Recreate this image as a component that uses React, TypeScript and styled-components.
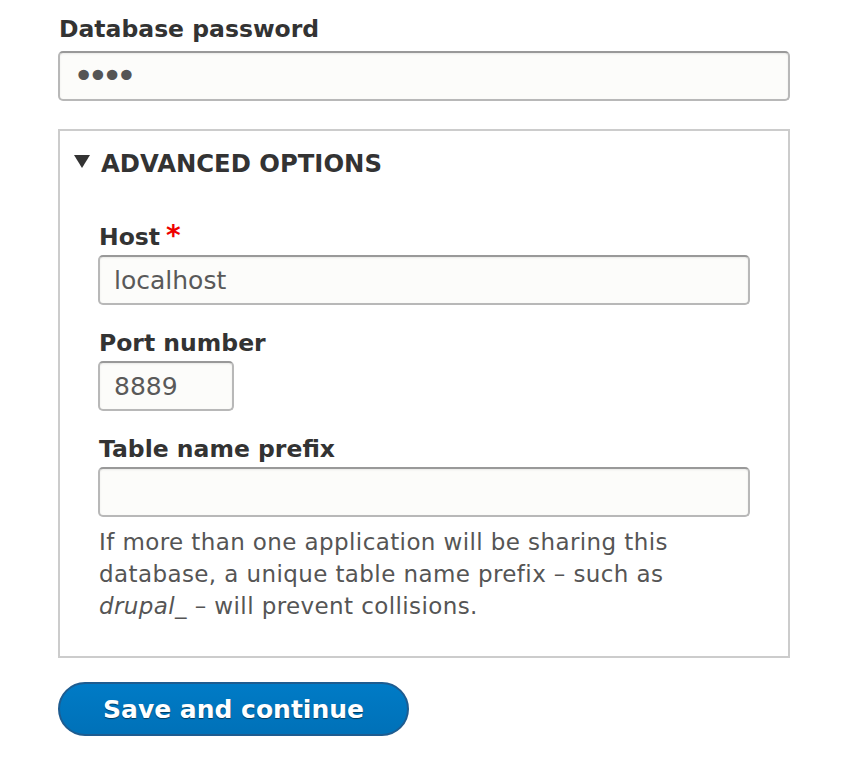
import styled, { createGlobalStyle } from "styled-components";

const GlobalStyle = createGlobalStyle`
  body {
    margin: 0;
    background: #fff;
    font-family: "DejaVu Sans", "Liberation Sans", sans-serif;
    color: #333;
  }
`;

const Page = styled.form`
  width: 732px;
  padding: 13px 0 0 58px;
`;

const FormItem = styled.div<{ $gap?: number }>`
  display: flex;
  flex-direction: column;
  margin-top: ${(p) => p.$gap ?? 0}px;
`;

const Label = styled.label<{ $space?: number }>`
  font-size: 23.5px;
  font-weight: bold;
  line-height: 32px;
  color: #333;
  margin: 0 0 ${(p) => p.$space ?? 2}px 1px;
`;

const Required = styled.span`
  color: #e00;
  margin-left: 6px;
  font-size: 28px;
  line-height: 0;
`;

const Input = styled.input<{ $width?: string }>`
  box-sizing: border-box;
  width: ${(p) => p.$width ?? "100%"};
  height: 50px;
  padding: 0 14px;
  font-family: inherit;
  font-size: 25px;
  color: #595959;
  background: #fcfcfa;
  border: 2px solid #b8b8b8;
  border-top-color: #999;
  border-radius: 5px;
  box-shadow: inset 0 1px 2px rgba(0, 0, 0, 0.08);
  outline: none;
`;

const PasswordBox = styled(Input)`
  display: flex;
  align-items: center;
  padding: 0 13px;
`;

const Dots = styled.span`
  font-size: 36px;
  line-height: 1;
  color: #555;
  letter-spacing: -7px;
`;

const Fieldset = styled.fieldset`
  box-sizing: border-box;
  margin: 28px 0 0;
  padding: 0 38px 34px 38px;
  border: 2px solid #ccc;
  min-width: 0;
`;

const Summary = styled.div`
  display: flex;
  align-items: center;
  gap: 11px;
  margin: 16px 0 0 -24px;
  font-size: 24.3px;
  font-weight: bold;
  color: #333;
  height: 32px;
`;

const Triangle = styled.svg`
  width: 16px;
  height: 13px;
  flex: none;
  margin-top: -3px;
`;

const FieldsetBody = styled.div`
  padding-top: 42px;
`;

const Description = styled.div`
  max-width: 600px;
  margin: 9px 0 0 1px;
  font-size: 23px;
  letter-spacing: 0.4px;
  line-height: 32px;
  color: #555;
`;

const Button = styled.button`
  align-self: flex-start;
  margin-top: 24px;
  height: 54px;
  padding: 0 43px;
  border: 2px solid #1e5c90;
  border-radius: 28px;
  background: linear-gradient(#007bc6, #0071b8);
  color: #fff;
  font-family: inherit;
  font-size: 25px;
  font-weight: bold;
  text-shadow: 0 1px 1px rgba(0, 0, 0, 0.5);
  cursor: pointer;
`;

const App = () => (
  <>
    <GlobalStyle />
    <Page onSubmit={(e) => e.preventDefault()}>
      <FormItem>
        <Label $space={6}>Database password</Label>
        <PasswordBox as="div">
          <Dots>••••</Dots>
        </PasswordBox>
      </FormItem>

      <Fieldset>
        <Summary>
          <Triangle viewBox="0 0 16 13">
            <polygon points="0,0 16,0 8,13" fill="#333" />
          </Triangle>
          ADVANCED OPTIONS
        </Summary>
        <FieldsetBody>
          <FormItem>
            <Label>
              Host<Required>*</Required>
            </Label>
            <Input defaultValue="localhost" />
          </FormItem>
          <FormItem $gap={22}>
            <Label>Port number</Label>
            <Input $width="136px" defaultValue="8889" />
          </FormItem>
          <FormItem $gap={22}>
            <Label>Table name prefix</Label>
            <Input />
            <Description>
              If more than one application will be sharing this database, a
              unique table name prefix – such as <em>drupal_</em> – will
              prevent collisions.
            </Description>
          </FormItem>
        </FieldsetBody>
      </Fieldset>

      <Button type="submit">Save and continue</Button>
    </Page>
  </>
);

export default App;
